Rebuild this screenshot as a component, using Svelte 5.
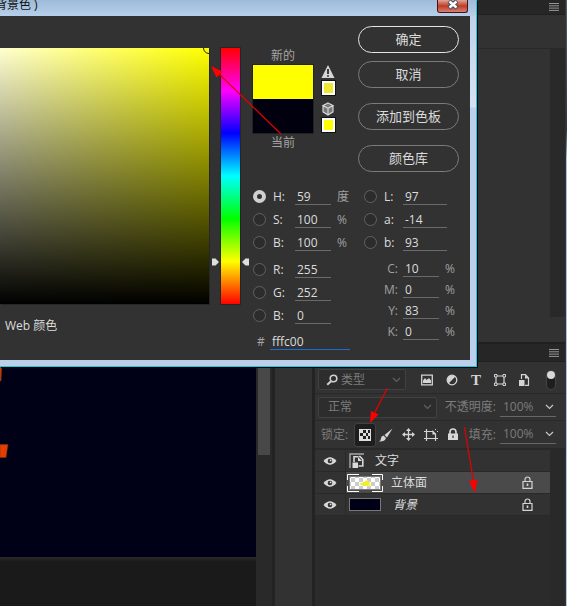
<script lang="ts">
    let hue = $state(59);
    let hex = $state('fffc00');
    let model = $state('H');

    const groups = [
        [
            { id: 'H', value: '59', unit: '度' },
            { id: 'S', value: '100', unit: '%' },
            { id: 'B', value: '100', unit: '%' },
        ],
        [
            { id: 'R', value: '255', unit: '' },
            { id: 'G', value: '252', unit: '' },
            { id: 'B', value: '0', unit: '' },
        ],
    ];
    const lab = [
        { id: 'L', value: '97' },
        { id: 'a', value: '-14' },
        { id: 'b', value: '93' },
    ];
    const cmyk = [
        { id: 'C', value: '10' },
        { id: 'M', value: '0' },
        { id: 'Y', value: '83' },
        { id: 'K', value: '0' },
    ];
    const layers = [
        { name: '文字', kind: 'smart', locked: false },
        { name: '立体面', kind: 'pixel', locked: true },
        { name: '背景', kind: 'background', locked: true },
    ];
    let selected = $state('立体面');

    let handleTop = $derived((1 - hue / 360) * 256);
</script>

{#snippet chevron()}
    <svg class="chevron" width="9" height="6" viewBox="0 0 9 6"><path d="M1 1l3.5 3.5L8 1" /></svg>
{/snippet}

{#snippet menuIcon()}
    <svg width="10" height="8" viewBox="0 0 10 8"><path d="M0 .5h10M0 2.8h10M0 5.1h10M0 7.4h10" stroke="#969696" /></svg>
{/snippet}

<div class="app">
    <main class="document">
        <div class="artboard">
            <svg class="art" width="10" height="460" viewBox="0 0 10 460">
                <path d="M0 360H2L1 381H0zM0 444.500H8L6 457.500H0z" fill="#e63c00" stroke="#6b3a10" stroke-width=".5" />
            </svg>
        </div>
        <div class="pasteboard"></div>
    </main>
    <div class="doc-scroll"><div class="doc-thumb"></div></div>
    <div class="dock"></div>

    <aside class="panels">
        <header class="panel-head"><button class="bare" aria-label="面板菜单">{@render menuIcon()}</button></header>
        <div class="panel-strip"></div>
        <div class="panel-body"><div class="panel-gutter"></div></div>
        <div class="panel-foot"></div>
        <header class="panel-head layers-head"><button class="bare" aria-label="图层菜单">{@render menuIcon()}</button></header>

        <div class="bar filter-bar">
            <div class="select kind">
                <svg class="search" width="12" height="12" viewBox="0 0 12 12"><circle cx="7.500" cy="4.500" r="3.300" fill="none" stroke="#d0d0d0" stroke-width="1.600" /><path d="M5 7.200L1.200 10.800" stroke="#d0d0d0" stroke-width="2" /></svg>
                <select aria-label="过滤"><option>类型</option></select>
                {@render chevron()}
            </div>
            <div class="filters">
                <button class="bare" aria-label="像素图层"><svg width="14" height="12" viewBox="0 0 14 12"><path d="M1.700 1.200h10.600v9.600H1.700z" fill="none" stroke="#d4d4d4" stroke-width="1.300" /><path d="M3 9V6.500L5 4l1.500 2L9 4l2 2.500V9z" fill="#d4d4d4" /></svg></button>
                <button class="bare" aria-label="调整图层"><svg width="12" height="12" viewBox="0 0 12 12"><circle cx="6" cy="6" r="4.800" fill="none" stroke="#d4d4d4" stroke-width="1.300" /><path d="M9.400 2.600L2.600 9.400A4.800 4.800 0 0 1 2.600 2.600 4.800 4.800 0 0 1 9.400 2.600z" fill="#d4d4d4" /></svg></button>
                <button class="bare type">T</button>
                <button class="bare" aria-label="形状图层"><svg width="12" height="12" viewBox="0 0 12 12"><path d="M2 2h8v8H2z" fill="none" stroke="#d4d4d4" stroke-width="1.200" /><path d="M.5.500h2.500v2.500H.5zM9 .500h2.500v2.500H9zM.5 9h2.500v2.500H.5zM9 9h2.500v2.500H9z" fill="#323232" stroke="#d4d4d4" /></svg></button>
                <button class="bare" aria-label="智能对象"><svg width="12" height="12" viewBox="0 0 12 12"><path d="M3.500 5V.7h4L10.500 4v7.300H7" fill="none" stroke="#d4d4d4" stroke-width="1.200" /><path d="M7 1v3.500h4M1 6h5.500v6H1z" fill="#d4d4d4" /></svg></button>
            </div>
            <button class="toggle" aria-label="打开或关闭过滤"><span></span></button>
        </div>

        <div class="bar">
            <div class="select blend">
                <select aria-label="混合模式"><option>正常</option></select>
                {@render chevron()}
            </div>
            <label class="amount">不透明度:<span class="number"><input value="100%" />{@render chevron()}</span></label>
        </div>

        <div class="bar lock-bar">
            <span class="lock-label">锁定:</span>
            <button class="bare pressed" aria-label="锁定透明像素"><svg width="12" height="12" viewBox="0 0 12 12"><path d="M0 0h12v12H0z" fill="#dcdcdc" /><path d="M4 1h3v3H4zM9 1h2v3H9zM1 4h3v3H1zM7 4h2v3H7zM4 7h3v3H4zM9 7h2v3H9z" fill="#202020" /></svg></button>
            <div class="locks">
                <button class="bare" aria-label="锁定图像像素"><svg width="14" height="14" viewBox="0 0 14 14"><path d="M13.500.5L8 9.500 5.500 7zM4.500 7.500L7 10Q6 13.800 0 13.500q2-1 2-3.200t2.500-2.800z" fill="#d4d4d4" /></svg></button>
                <button class="bare" aria-label="锁定位置"><svg width="13" height="13" viewBox="0 0 13 13"><path d="M6.500 1v11M1 6.500h11" stroke="#d4d4d4" stroke-width="1.300" /><path d="M6.500 0L9 3H4zM6.500 13L9 10H4zM0 6.500L3 4v5zM13 6.500L10 4v5z" fill="#d4d4d4" /></svg></button>
                <button class="bare" aria-label="锁定画板"><svg width="14" height="12" viewBox="0 0 14 12"><path d="M0 2.500h9M2.500 0v12M0 9.500h14M11.500 12V5L9 2.500V5h3" fill="none" stroke="#d4d4d4" stroke-width="1.200" /><path d="M11 0h1v1h-1zM13 2h1v1h-1z" fill="#d4d4d4" /></svg></button>
                <button class="bare" aria-label="锁定全部"><svg width="12" height="13" viewBox="0 0 12 13"><path d="M3 6V4a3 3 0 0 1 6 0v2" fill="none" stroke="#d8d8d8" stroke-width="1.600" /><path d="M1 5.500h10V12H1z" fill="#d8d8d8" /><path d="M5.400 7.500h1.200V10H5.400z" fill="#323232" /></svg></button>
            </div>
            <label class="amount">填充:<span class="number"><input value="100%" />{@render chevron()}</span></label>
        </div>

        <div class="layers">
            <ul>
                {#each layers as layer}
                    <li class:active={layer.name === selected}>
                        <button class="bare eye" aria-label="可见性"><svg width="14" height="8" viewBox="0 0 14 8"><path d="M.5 4Q7-3.500 13.500 4 7 11.500.5 4z" fill="#d8d8d8" /><circle cx="7" cy="4" r="2.300" fill="#323232" /><circle cx="7.600" cy="3.400" r=".9" fill="#d8d8d8" /></svg></button>
                        <button class="layer" onclick={() => (selected = layer.name)}>
                            {#if layer.kind === 'smart'}
                                <svg class="smart" width="16" height="16" viewBox="0 0 16 16"><path d="M1 15V1h14" fill="none" stroke="#a8a8a8" stroke-width="1.400" /><path d="M5 9V3.700h4.500M10 3.500h1l2.800 3V13H9.500" fill="none" stroke="#d8d8d8" stroke-width="1.600" /><path d="M9 4v4h4M3.500 9.500H9V15H3.500z" fill="#dcdcdc" /></svg>
                            {:else if layer.kind === 'pixel'}
                                <svg class="thumb" width="36" height="18" viewBox="0 0 36 18">
                                    <defs><pattern id="checks" width="8" height="8" patternUnits="userSpaceOnUse"><path d="M0 0h8v8H0z" fill="#fff" /><path d="M0 0h4v4H0zM4 4h4v4H4z" fill="#ccc" /></pattern></defs>
                                    <path d="M2.500 2.500h31v13h-31z" fill="url(#checks)" stroke="#777" />
                                    <path d="M12 9h5l1-2 3-1v2l1-1 1 2-1 1h3v1l-6 1-5-1z" fill="#f2ef2a" />
                                    <path d="M.5 6V.5H12M25 .5h10.500V6M35.500 12v5.500H25M12 17.500H.5V12" fill="none" stroke="#fff" />
                                </svg>
                            {:else}
                                <span class="thumb fill"></span>
                            {/if}
                            <span class="name {layer.kind}">{layer.name}</span>
                            {#if layer.locked}
                                <svg class="padlock" width="11" height="13" viewBox="0 0 11 13"><path d="M3 5V3.500a2.500 2.500 0 0 1 5 0V5M1 5.500h9v6.800H1z" fill="none" stroke="#d4d4d4" stroke-width="1.200" /><path d="M4.700 7.500h1.600V10H4.700z" fill="#d4d4d4" /></svg>
                            {/if}
                        </button>
                    </li>
                {/each}
            </ul>
            <div class="layers-gutter"></div>
        </div>
    </aside>
    <div class="screen-edge"></div>

    <section class="dialog" aria-label="拾色器">
        <header class="title">
            <span>背景色 )</span>
            <button class="close" aria-label="关闭"><svg width="12" height="10" viewBox="0 0 12 10"><path d="M2 1l8 7M10 1L2 8" stroke="#454d63" stroke-width="4.500" /><path d="M2.500 1.500l7 6M9.500 1.500l-7 6" stroke="#fff" stroke-width="2.400" /></svg></button>
        </header>
        <div class="dialog-body">
            <div class="pick">
                <div class="spectrum">
                    <div class="field"><span class="ring"></span></div>
                    <div class="hue">
                        <div class="hue-ramp"></div>
                        <svg class="handles" style="top: {handleTop}px" width="37" height="8" viewBox="0 0 37 8"><path d="M0 .5h3.500L7 4 3.500 7.500H0zM37 .5h-3.500L30 4l3.500 3.500H37z" fill="#dedede" /></svg>
                    </div>
                </div>
                <span class="web">Web 颜色</span>
            </div>

            <div class="side">
                <div class="top">
                    <div class="preview">
                        <span>新的</span>
                        <div class="swatch"></div>
                        <span>当前</span>
                    </div>
                    <div class="warnings">
                        <svg width="14" height="14" viewBox="0 0 14 14"><path d="M7 0l6.500 13H.5z" fill="#d6d6d6" /><path d="M7 4v5M7 10.200v1.600" stroke="#222" stroke-width="1.700" /></svg>
                        <button class="chip dull" aria-label="色域内颜色"></button>
                        <svg class="cube" width="14" height="14" viewBox="0 0 14 14"><path d="M7 1l5 2.500v6.300L7 13 2 9.800V3.500z" fill="#777" /><path d="M7 1l5 2.500L7 6.300 2 3.500zM7 6.300V13M7 1l5 2.500v6.300L7 13 2 9.800V3.500z" fill="none" stroke="#d6d6d6" stroke-width="1.200" /></svg>
                        <button class="chip" aria-label="Web 安全颜色"></button>
                    </div>
                    <div class="actions">
                        <button class="primary">确定</button>
                        <button>取消</button>
                        <button class="apart">添加到色板</button>
                        <button class="apart">颜色库</button>
                    </div>
                </div>
                <div class="values">
                    <div class="column">
                        {#each groups as group, g}
                            <div class="group">
                                {#each group as row}
                                    <label class="row">
                                        <input type="radio" name="model" value={g === 0 ? row.id : 'rgb' + row.id} bind:group={model} />
                                        <span class="key">{row.id}:</span>
                                        <input type="text" value={row.value} />
                                        <span class="unit">{row.unit}</span>
                                    </label>
                                {/each}
                            </div>
                        {/each}
                        <label class="row hex"><span>#</span><input type="text" bind:value={hex} /></label>
                    </div>
                    <div class="column lab">
                        <div class="group">
                            {#each lab as row}
                                <label class="row">
                                    <input type="radio" name="model" value={'lab' + row.id} bind:group={model} />
                                    <span class="key">{row.id}:</span>
                                    <input type="text" value={row.value} />
                                </label>
                            {/each}
                        </div>
                        <div class="cmyk">
                            {#each cmyk as row}
                                <label class="row">
                                    <span class="ink">{row.id}:</span>
                                    <input type="text" value={row.value} />
                                    <span class="unit">%</span>
                                </label>
                            {/each}
                        </div>
                    </div>
                </div>
            </div>
        </div>
    </section>

    <svg class="arrows" width="367" height="500" viewBox="200 0 367 500">
        <path d="M281 134L217 72M387.500 388L374 414M464.500 427L473.500 482" stroke="#e00000" stroke-width="1.300" />
        <path d="M211 66l11.500 5.500-6 6zM370 423l1-12 7.500 3.500zM475 493l-6-12 8.500-1.500z" fill="#f00" />
    </svg>
</div>

<style>
    :global(body) {
        margin: 0;
        background: #2b2b2b;
    }

    .app, .app * {
        box-sizing: border-box;
    }

    .app {
        position: relative;
        display: flex;
        min-height: 100vh;
        overflow: hidden;
        color: #dcdcdc;
        font: 12px/16px "Open Sans", "Noto Sans CJK SC", sans-serif;
    }

    svg {
        display: block;
        flex: none;
    }

    button, input, select {
        margin: 0;
        padding: 0;
        color: inherit;
        font: inherit;
        border: none;
        border-radius: 0;
        background: none;
        outline: none;
        appearance: none;
    }

    .bare {
        display: flex;
        align-items: center;
        justify-content: center;
    }

    .document {
        display: flex;
        flex: 1;
        flex-direction: column;
        min-width: 0;
    }

    .artboard {
        flex: 1;
        background: #000017;
    }

    .pasteboard {
        height: 49px;
        background: linear-gradient(#292929, #1a1a1a 5px);
    }

    .doc-scroll {
        width: 16px;
        padding: 0 2px;
        background: #292929;
    }

    .doc-thumb {
        height: 455px;
        background: #484848;
    }

    .dock {
        width: 43px;
        background: #323232;
        border: solid #232323;
        border-width: 0 3px;
    }

    .panels {
        display: flex;
        flex-direction: column;
        width: 250px;
        background: #323232;
    }

    .panel-head {
        display: flex;
        align-items: center;
        justify-content: flex-end;
        height: 15px;
        padding-right: 6px;
        background: #262626;
        border-bottom: 1px solid #202020;
    }

    .layers-head {
        height: 20px;
        border-top: 2px solid #202020;
    }

    .panel-strip {
        height: 34px;
        border-bottom: 1px solid #292929;
    }

    .panel-body {
        display: flex;
        justify-content: flex-end;
        height: 268px;
    }

    .panel-gutter {
        width: 15px;
        background: #292929;
    }

    .panel-foot {
        height: 25px;
    }

    .bar {
        display: flex;
        align-items: center;
        height: 27px;
        padding: 0 9px 0 3px;
        color: #7c7c7c;
        border-bottom: 1px solid #292929;
    }

    .filter-bar {
        height: 32px;
        padding-top: 4px;
    }

    .select {
        display: flex;
        align-items: center;
        height: 21px;
        padding: 0 4px 0 9px;
        background: #2d2d2d;
        border: 1px solid #414141;
        border-radius: 2px;
    }

    .select select {
        flex: 1;
        min-width: 0;
    }

    .kind {
        width: 88px;
        padding-left: 7px;
    }

    .search {
        margin-right: 3px;
    }

    .kind .chevron, .blend .chevron {
        stroke: #606060;
    }

    .blend {
        width: 119px;
    }

    .chevron {
        fill: none;
        stroke: #c8c8c8;
        stroke-width: 1.2;
    }

    .filters {
        display: flex;
        flex: 1;
        align-items: center;
        justify-content: space-between;
        padding: 0 16px 0 14px;
    }

    .type {
        width: 12px;
        color: #d4d4d4;
        font: bold 15px/16px "Liberation Serif", serif;
    }

    .toggle {
        width: 10px;
        height: 20px;
        background: #1e1e1e;
        border: 1px solid #444;
        border-radius: 5px;
    }

    .toggle span {
        display: block;
        width: 8px;
        height: 8px;
        margin-bottom: 10px;
        background: #d8d8d8;
        border-radius: 50%;
    }

    .amount {
        display: flex;
        align-items: center;
        gap: 4px;
        margin-left: auto;
    }

    .number {
        display: flex;
        align-items: center;
        width: 56px;
        height: 19px;
        padding: 0 2px 0 3px;
        border-bottom: 1px solid #686868;
    }

    .number input {
        flex: 1;
        width: 0;
        min-width: 0;
    }

    .lock-bar {
        height: 29px;
        border-bottom: 2px solid #292929;
    }

    .lock-label {
        width: 36px;
        padding-left: 3px;
    }

    .pressed {
        width: 22px;
        height: 24px;
        background: #1e1e1e;
        border: 1px solid #414141;
        border-radius: 3px;
    }

    .locks {
        display: flex;
        align-items: center;
        gap: 9px;
        margin-left: 3px;
    }

    .layers {
        display: flex;
        flex: 1;
        background: #2b2b2b;
    }

    .layers ul {
        flex: 1;
        margin: 0;
        padding: 0;
        list-style: none;
    }

    .layers li {
        display: flex;
        height: 22px;
        background: #323232;
        border-bottom: 1px solid #292929;
    }

    .layers-gutter {
        width: 15px;
        background: #292929;
    }

    .eye {
        width: 31px;
        border-right: 1px solid #292929;
    }

    .layer {
        display: flex;
        flex: 1;
        align-items: center;
        padding: 0 17px 0 1px;
        text-align: left;
    }

    .active .layer {
        background: #4a4a4a;
    }

    .smart {
        margin: 0 8px 0 2px;
    }

    .thumb {
        margin-right: 8px;
    }

    .fill {
        width: 32px;
        height: 13px;
        margin: 0 12px 0 2px;
        background: #000017;
        border: 1px solid #777;
    }

    .name {
        flex: 1;
    }

    .background {
        font-style: italic;
    }

    .screen-edge {
        width: 2px;
        background: linear-gradient(#525c68, #303840 130px, #a9bdd6 158px, #b2c5dc);
        border-left: 1px solid #30343c;
    }

    .dialog {
        position: absolute;
        top: 0;
        right: 90px;
        left: 0;
        background: linear-gradient(#bccfe9, #d6e2f2 107px, #bad0eb 108px);
        border: solid #19cbe6;
        border-width: 0 1px 1px 0;
        box-shadow: 1px 1px 0 #000;
    }

    .title {
        display: flex;
        justify-content: space-between;
        height: 16px;
        padding-right: 8px;
        color: #111;
        line-height: 12px;
        background: linear-gradient(#9fbbd8, #b7cfea);
    }

    .title span {
        margin: -1px 0 0 -5px;
    }

    .close {
        display: flex;
        justify-content: center;
        width: 31px;
        height: 13px;
        background: linear-gradient(#e0a598, #bd3c26 50%, #d98170);
        border: 1px solid #46141b;
        border-top: none;
        border-radius: 0 0 3px 3px;
    }

    .dialog-body {
        display: flex;
        height: 344px;
        margin: 0 6px 6px 0;
        background: #323232;
    }

    .pick {
        flex: 1;
        min-width: 0;
        padding-top: 32px;
    }

    .spectrum {
        display: flex;
        height: 256px;
    }

    .field {
        position: relative;
        flex: 1;
        overflow: hidden;
        background: linear-gradient(transparent, #000), linear-gradient(to right, #ffffd1, #ff0);
        box-shadow: 1px 1px 0 #262626;
    }

    .ring {
        position: absolute;
        top: -6px;
        right: -6px;
        width: 12px;
        height: 12px;
        border: 1px solid #222;
        border-radius: 50%;
    }

    .hue {
        position: relative;
        width: 43px;
        padding: 0 12px;
    }

    .hue-ramp {
        height: 100%;
        background: linear-gradient(#f00, #f0f, #00f, #0ff, #0f0, #ff0, #f00);
        box-shadow: 0 0 0 1px #252525;
    }

    .handles {
        position: absolute;
        left: 3px;
        transform: translateY(-50%);
    }

    .web {
        display: block;
        margin: 14px 0 0 5px;
    }

    .side {
        width: 218px;
    }

    .top {
        display: flex;
        height: 169px;
    }

    .preview {
        width: 62px;
        padding-top: 32px;
        color: #a5a5a5;
        text-align: center;
    }

    .preview span {
        display: block;
    }

    .swatch {
        height: 70px;
        margin-bottom: 1px;
        background: linear-gradient(#ff0 50%, #00000f 50%);
        border: 1px solid #222;
    }

    .warnings {
        display: flex;
        flex-direction: column;
        width: 14px;
        margin-left: 7px;
        padding-top: 49px;
    }

    .chip {
        height: 14px;
        margin: 2px 0 0 1px;
        background: #ff0;
        border: 2px solid #fff;
        box-shadow: 0 0 0 1px #111;
    }

    .dull {
        background: #eee833;
    }

    .cube {
        margin-top: 7px;
    }

    .actions {
        display: flex;
        flex-direction: column;
        width: 101px;
        margin: 10px 11px 0 auto;
    }

    .actions button {
        height: 27px;
        margin-bottom: 8px;
        padding-bottom: 2px;
        font-size: 13px;
        border: 1px solid #7b7b7b;
        border-radius: 14px;
    }

    .actions .primary {
        border-color: #e4e4e4;
    }

    .actions .apart {
        margin: 7px 0 8px;
    }

    .values {
        display: flex;
    }

    .column {
        width: 109px;
    }

    .column:first-child {
        width: 111px;
        flex: none;
    }

    .group {
        margin-bottom: 4px;
    }

    .row {
        display: flex;
        align-items: center;
        height: 23px;
        padding-left: 1px;
    }

    .row input[type="radio"] {
        width: 13px;
        height: 13px;
        margin-right: 7px;
        background: #2c2c2c;
        border: 1px solid #626262;
        border-radius: 50%;
    }

    .row input[type="radio"]:checked {
        background: #323232;
        border: 4px solid #d0d0d0;
    }

    .row input[type="text"] {
        width: 36px;
        height: 17px;
        padding: 0 2px;
        border-bottom: 1px solid #6a6a6a;
    }

    .key {
        width: 22px;
    }

    .unit {
        margin-left: 6px;
        color: #a0a0a0;
    }

    .hex {
        margin-top: -1px;
        color: #a5a5a5;
    }

    .row.hex input {
        width: 80px;
        margin-left: 5px;
        color: #dcdcdc;
        border-color: #1e6ad0;
    }

    .hex span {
        width: 8px;
        margin-left: 4px;
    }

    .lab .key {
        width: 19px;
    }

    .lab .group input[type="text"] {
        width: 44px;
    }

    .cmyk .row {
        height: 21px;
    }

    .ink {
        width: 34px;
        margin-right: 5px;
        color: #a0a0a0;
        text-align: right;
    }

    .arrows {
        position: absolute;
        top: 0;
        right: 0;
        pointer-events: none;
    }
</style>
